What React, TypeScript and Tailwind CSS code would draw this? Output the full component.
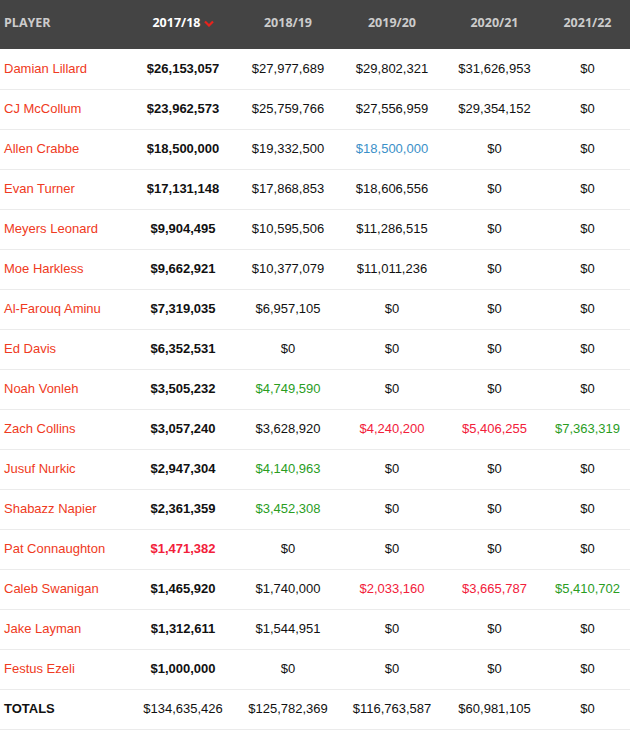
import React from "react";

type Cell = { v: string; c?: "r" | "g" | "b" };
const rows: { name: string; vals: (string | Cell)[] }[] = [
  { name: "Damian Lillard", vals: ["$26,153,057", "$27,977,689", "$29,802,321", "$31,626,953", "$0"] },
  { name: "CJ McCollum", vals: ["$23,962,573", "$25,759,766", "$27,556,959", "$29,354,152", "$0"] },
  { name: "Allen Crabbe", vals: ["$18,500,000", "$19,332,500", { v: "$18,500,000", c: "b" }, "$0", "$0"] },
  { name: "Evan Turner", vals: ["$17,131,148", "$17,868,853", "$18,606,556", "$0", "$0"] },
  { name: "Meyers Leonard", vals: ["$9,904,495", "$10,595,506", "$11,286,515", "$0", "$0"] },
  { name: "Moe Harkless", vals: ["$9,662,921", "$10,377,079", "$11,011,236", "$0", "$0"] },
  { name: "Al-Farouq Aminu", vals: ["$7,319,035", "$6,957,105", "$0", "$0", "$0"] },
  { name: "Ed Davis", vals: ["$6,352,531", "$0", "$0", "$0", "$0"] },
  { name: "Noah Vonleh", vals: ["$3,505,232", { v: "$4,749,590", c: "g" }, "$0", "$0", "$0"] },
  { name: "Zach Collins", vals: ["$3,057,240", "$3,628,920", { v: "$4,240,200", c: "r" }, { v: "$5,406,255", c: "r" }, { v: "$7,363,319", c: "g" }] },
  { name: "Jusuf Nurkic", vals: ["$2,947,304", { v: "$4,140,963", c: "g" }, "$0", "$0", "$0"] },
  { name: "Shabazz Napier", vals: ["$2,361,359", { v: "$3,452,308", c: "g" }, "$0", "$0", "$0"] },
  { name: "Pat Connaughton", vals: [{ v: "$1,471,382", c: "r" }, "$0", "$0", "$0", "$0"] },
  { name: "Caleb Swanigan", vals: ["$1,465,920", "$1,740,000", { v: "$2,033,160", c: "r" }, { v: "$3,665,787", c: "r" }, { v: "$5,410,702", c: "g" }] },
  { name: "Jake Layman", vals: ["$1,312,611", "$1,544,951", "$0", "$0", "$0"] },
  { name: "Festus Ezeli", vals: ["$1,000,000", "$0", "$0", "$0", "$0"] },
];

const totals = ["$134,635,426", "$125,782,369", "$116,763,587", "$60,981,105", "$0"];

function colorClass(c?: "r" | "g" | "b") {
  if (c === "r") return "text-[#f2203a]";
  if (c === "g") return "text-[#2a9d1f]";
  if (c === "b") return "text-[#3a90c8]";
  return "text-[#111111]";
}

export default function App() {
  const headFont = { fontFamily: '"Open Sans", sans-serif' };
  const th = "pb-[3px] text-center text-[12.5px] font-bold text-[#cccccc]";
  return (
    <div className="w-[630px] bg-white" style={{ fontFamily: '"Liberation Sans", Arial, sans-serif' }}>
      <table className="w-[630px] table-fixed border-collapse">
        <colgroup>
          <col className="w-[130px]" />
          <col className="w-[106px]" />
          <col className="w-[104px]" />
          <col className="w-[104px]" />
          <col className="w-[101px]" />
          <col className="w-[85px]" />
        </colgroup>
        <thead>
          <tr className="h-[49px] bg-[#444444]">
            <th className="pl-[4px] pb-[3px] text-left text-[12.5px] font-bold text-[#cccccc]" style={headFont}>PLAYER</th>
            <th className="pb-[3px] text-center text-[12.5px] font-bold text-white" style={headFont}>
              <span className="inline-flex items-center gap-[3px]">
                2017/18
                <svg width="10" height="7" viewBox="0 0 10 7">
                  <polyline points="1,1.5 5,5.5 9,1.5" fill="none" stroke="#e8231c" strokeWidth="2.2" />
                </svg>
              </span>
            </th>
            <th className={th} style={headFont}>2018/19</th>
            <th className={th} style={headFont}>2019/20</th>
            <th className={th} style={headFont}>2020/21</th>
            <th className={th} style={headFont}>2021/22</th>
          </tr>
        </thead>
        <tbody>
          {rows.map((r) => (
            <tr key={r.name} className="h-[40px] border-b border-[#ebebeb] text-[13px]">
              <td className="pl-[4px] text-left text-[#ef3a22]">{r.name}</td>
              {r.vals.map((val, i) => {
                const cell: Cell = typeof val === "string" ? { v: val } : val;
                return (
                  <td key={i} className={`text-center ${i === 0 ? "font-bold" : ""} ${colorClass(cell.c)}`}>
                    {cell.v}
                  </td>
                );
              })}
            </tr>
          ))}
          <tr className="h-[40px] border-b border-[#ebebeb] text-[13px]">
            <td className="pl-[4px] text-left font-bold text-[#111111]">TOTALS</td>
            {totals.map((t, i) => (
              <td key={i} className="text-center text-[#111111]">{t}</td>
            ))}
          </tr>
        </tbody>
      </table>
    </div>
  );
}
